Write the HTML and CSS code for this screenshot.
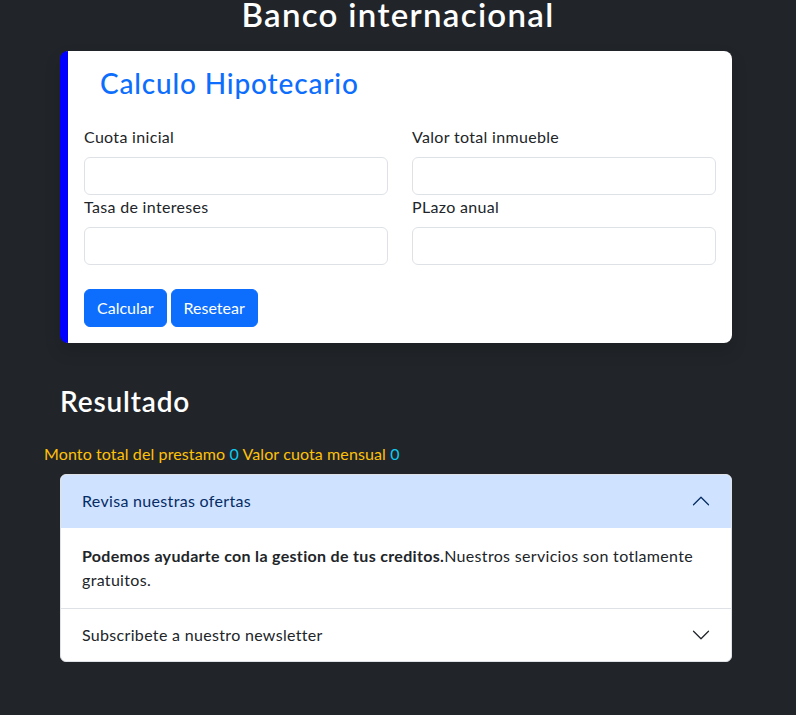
FILE: index.html
```html
<!DOCTYPE html>
<html lang="es">
<head>
<meta charset="utf-8">
<title>Banco internacional</title>
<link rel="stylesheet" href="styles.css">
</head>
<body>
<h1 class="title">Banco internacional</h1>
<div class="card">
  <h2 class="card-title">Calculo Hipotecario</h2>
  <form class="form-grid">
    <div class="field">
      <label class="label">Cuota inicial</label>
      <input class="input" type="text">
    </div>
    <div class="field">
      <label class="label">Valor total inmueble</label>
      <input class="input" type="text">
    </div>
    <div class="field">
      <label class="label">Tasa de intereses</label>
      <input class="input" type="text">
    </div>
    <div class="field">
      <label class="label">PLazo anual</label>
      <input class="input" type="text">
    </div>
  </form>
  <div class="buttons">
    <button class="btn" type="button">Calcular</button>
    <button class="btn" type="button">Resetear</button>
  </div>
</div>
<h2 class="result-title">Resultado</h2>
<p class="summary">Monto total del prestamo <span class="num">0</span> Valor cuota mensual <span class="num">0</span></p>
<div class="accordion">
  <div class="acc-header acc-open">
    <span>Revisa nuestras ofertas</span>
    <svg class="chev chev-up" viewBox="0 0 16 16" fill="none" stroke="#052c65" stroke-width="1" stroke-linecap="round" stroke-linejoin="round"><path d="M2 5L8 11L14 5"/></svg>
  </div>
  <div class="acc-body"><strong>Podemos ayudarte con la gestion de tus creditos.</strong>Nuestros servicios son totlamente gratuitos.</div>
  <div class="acc-header acc-closed">
    <span>Subscribete a nuestro newsletter</span>
    <svg class="chev" viewBox="0 0 16 16" fill="none" stroke="#212529" stroke-width="1" stroke-linecap="round" stroke-linejoin="round"><path d="M2 5L8 11L14 5"/></svg>
  </div>
</div>
</body>
</html>
```
FILE: styles.css
```css
* { box-sizing: border-box; }
html, body { margin: 0; padding: 0; }
body {
  background: #212529;
  font-family: Lato, "Liberation Sans", sans-serif;
  font-size: 16px;
  line-height: 1.5;
  color: #212529;
  letter-spacing: 0.02em;
  padding-bottom: 40px;
}
.title {
  margin: -5px 0 0;
  text-align: center;
  color: #fff;
  font-size: 33px;
  font-weight: 600;
  line-height: 1.2;
  letter-spacing: 0.04em;
}
.card {
  margin: 16px 0 0 60px;
  width: 672px;
  background: #fff;
  border-left: 8px solid #0000ff;
  border-radius: 8px;
  padding: 16px;
  box-shadow: 0 8px 16px rgba(0,0,0,0.15);
}
.card-title {
  margin: 0 0 25px;
  padding-left: 16px;
  color: #0d6efd;
  font-size: 28px;
  font-weight: 500;
  line-height: 1.2;
  letter-spacing: 0.03em;
}
.form-grid {
  display: grid;
  grid-template-columns: 1fr 1fr;
  column-gap: 24px;
  row-gap: 0;
  margin: 0;
}
.field { display: flex; flex-direction: column; }
.label { display: block; margin-bottom: 8px; line-height: 24px; }
.input {
  display: block;
  width: 100%;
  height: 38px;
  border: 1px solid #dee2e6;
  border-radius: 6px;
  background: #fff;
  font: inherit;
}
.buttons { display: flex; gap: 4px; margin-top: 24px; }
.btn {
  background: #0d6efd;
  color: #fff;
  border: 1px solid #0d6efd;
  border-radius: 6px;
  padding: 6px 12px;
  font: inherit;
  letter-spacing: 0;
  line-height: 24px;
  height: 38px;
}
.result-title {
  margin: 42px 0 0 60px;
  color: #fff;
  font-size: 28px;
  font-weight: 600;
  line-height: 1.2;
  letter-spacing: 0.03em;
}
.summary {
  margin: 23px 0 0 44px;
  color: #ffc107;
  line-height: 24px;
  letter-spacing: 0.11px;
}
.num { color: #0dcaf0; }
.accordion {
  margin: 8px 0 0 60px;
  width: 672px;
  background: #fff;
  border: 1px solid #dee2e6;
  border-radius: 6px;
  overflow: hidden;
}
.acc-header {
  display: flex;
  align-items: center;
  justify-content: space-between;
  height: 53px;
  padding: 0 20px 0 21px;
}
.acc-open { background: #cfe2ff; color: #052c65; }
.acc-closed { border-top: 1px solid #dee2e6; height: 53px; }
.chev { width: 20px; height: 20px; }
.chev-up { transform: rotate(180deg); }
.acc-body { padding: 16px 20px 16px 21px; line-height: 24px; }
.acc-body strong { font-weight: 700; }
```
